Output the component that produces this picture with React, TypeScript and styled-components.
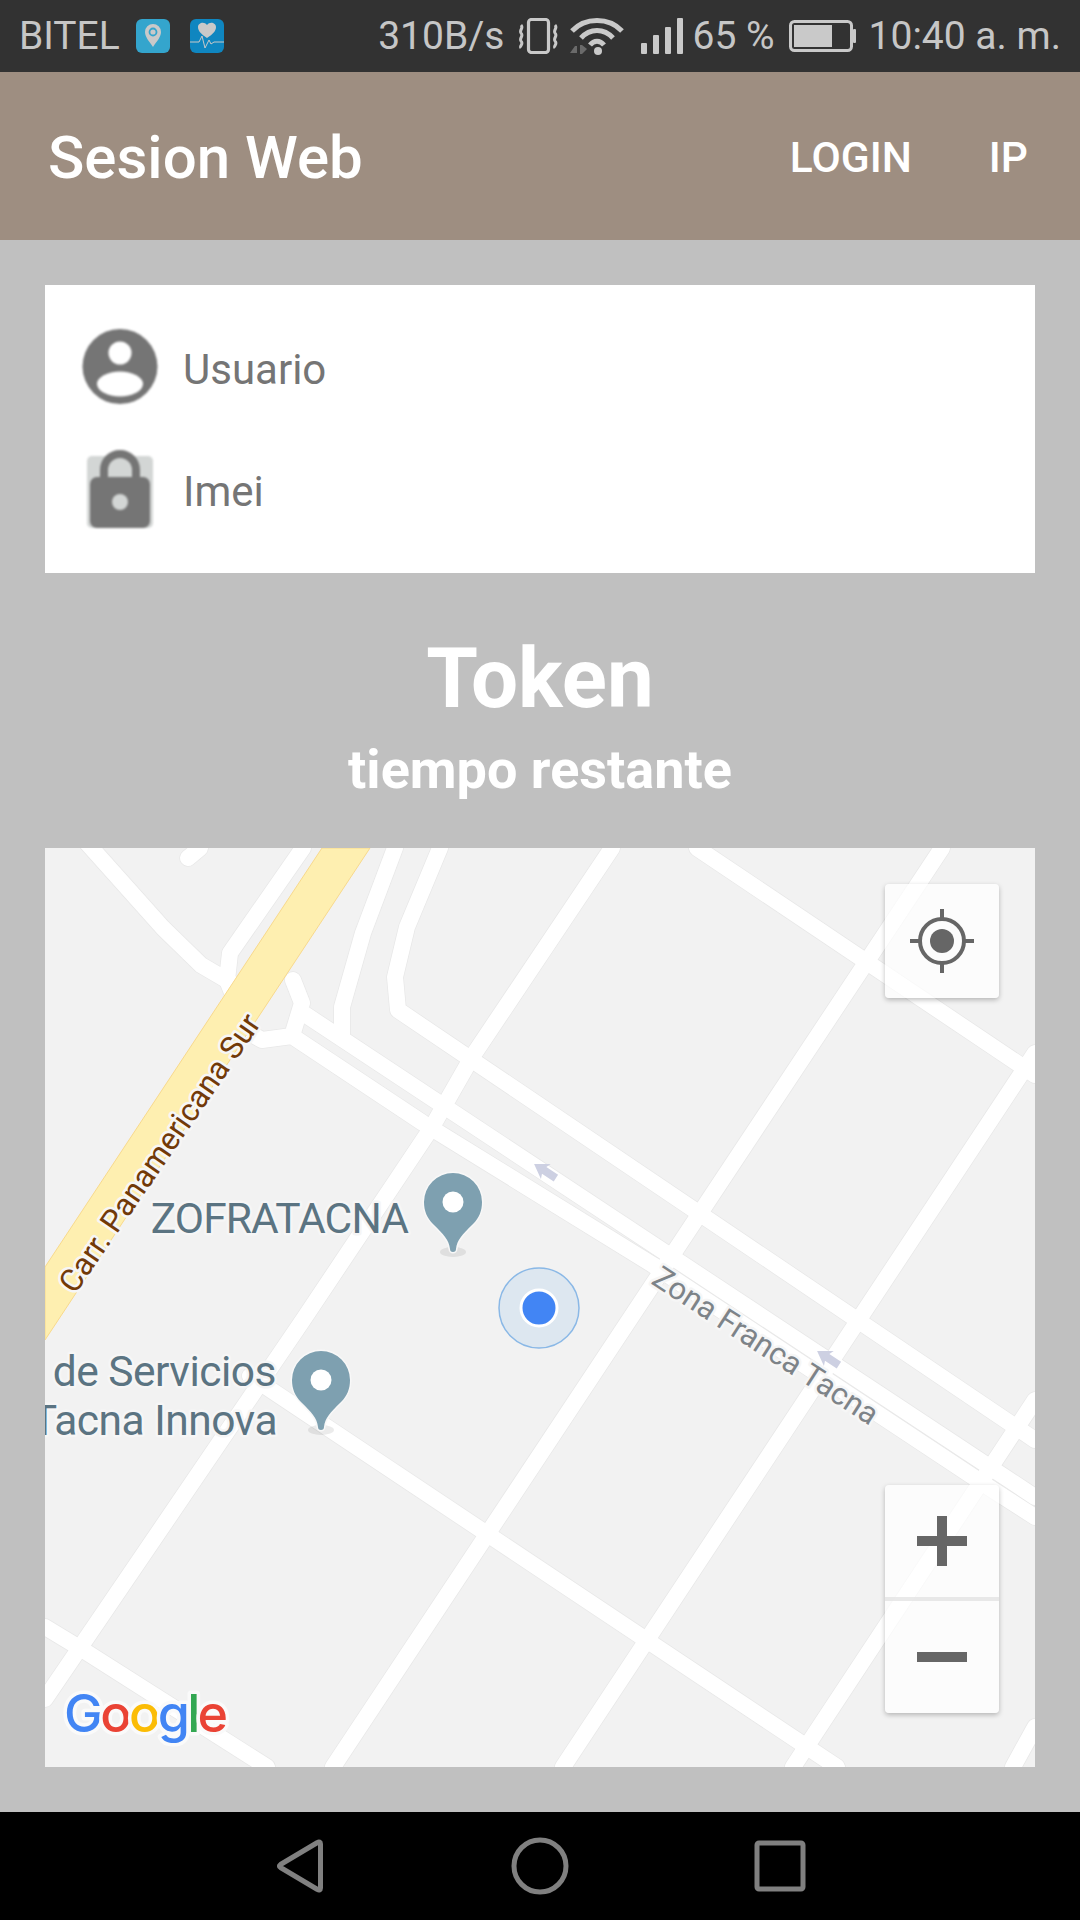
import { createGlobalStyle, styled } from "styled-components";

const GlobalStyle = createGlobalStyle`
  html, body {
    margin: 0;
    padding: 0;
    background: #c0c0c0;
    font-family: Roboto, "Liberation Sans", sans-serif;
  }
`;

const Page = styled.div`
  width: 1080px;
  height: 1920px;
  display: flex;
  flex-direction: column;
  overflow: hidden;
`;

const StatusBar = styled.div`
  height: 72px;
  flex: none;
  background: #323232;
  color: #c6c6c6;
  display: flex;
  align-items: center;
  justify-content: space-between;
  padding: 0 19px 0 19px;
  font-size: 39px;
  font-weight: 400;
`;

const StatusGroup = styled.div<{ $gap?: number }>`
  display: flex;
  align-items: center;
  gap: ${({ $gap }) => $gap ?? 0}px;
`;

const StatusText = styled.span<{ $ml?: number }>`
  white-space: nowrap;
  line-height: 72px;
  margin-left: ${({ $ml }) => $ml ?? 0}px;
`;

const AppIcon = styled.svg`
  display: block;
  width: 34px;
  height: 34px;
`;

const StatusIcon = styled.svg<{ $ml: number }>`
  display: block;
  flex: none;
  margin-left: ${({ $ml }) => $ml}px;
`;

const AppBar = styled.header`
  height: 168px;
  flex: none;
  box-sizing: border-box;
  background: #9e8e81;
  color: #fff;
  display: flex;
  align-items: center;
  justify-content: space-between;
  padding: 3px 52px 0 48px;
`;

const AppTitle = styled.h1`
  margin: 0;
  font-size: 60px;
  font-weight: 500;
`;

const AppActions = styled.nav`
  display: flex;
  gap: 77px;
`;

const AppAction = styled.span`
  font-size: 42.5px;
  font-weight: 500;
`;

const Content = styled.main`
  flex: 1;
  display: flex;
  flex-direction: column;
  padding: 45px 45px;
`;

const UserCard = styled.section`
  height: 288px;
  flex: none;
  box-sizing: border-box;
  background: #fff;
  padding: 44px 38px 0;
  display: flex;
  flex-direction: column;
  gap: 44px;
`;

const UserRow = styled.div`
  display: flex;
  align-items: center;
  height: 78px;
  gap: 24px;
`;

const RowIcon = styled.svg`
  width: 76px;
  height: 80px;
  flex: none;
  filter: blur(1px);
  overflow: visible;
`;

const RowLabel = styled.span`
  font-size: 42px;
  color: #757575;
  margin-top: 2px;
`;

const TokenBlock = styled.section`
  flex: 1;
  display: flex;
  flex-direction: column;
  align-items: center;
  color: #fff;
  padding-top: 57px;
`;

const TokenTitle = styled.div`
  font-size: 83.5px;
  font-weight: 700;
  line-height: 98px;
`;

const TokenSub = styled.div`
  font-size: 54px;
  font-weight: 700;
  line-height: 60px;
  margin-top: 12px;
`;

const MapBox = styled.section`
  position: relative;
  width: 990px;
  height: 919px;
  flex: none;
  background: #f2f2f2;
  overflow: hidden;
`;

const MapCanvas = styled.svg`
  display: block;
  width: 990px;
  height: 919px;
`;

const MapLabel = styled.text<{ $color: string; $size: number; $spacing?: number }>`
  font-family: Roboto, sans-serif;
  font-size: ${({ $size }) => $size}px;
  letter-spacing: ${({ $spacing }) => $spacing ?? 0}px;
  fill: ${({ $color }) => $color};
  stroke: #f6f6f6;
  stroke-width: 5px;
  stroke-linejoin: round;
  paint-order: stroke;
`;

const LogoText = styled.text`
  font-family: Inter, Roboto, sans-serif;
  font-size: 52px;
  font-weight: 500;
  letter-spacing: -2.7px;
  stroke: #fafafa;
  stroke-width: 7px;
  stroke-linejoin: round;
  paint-order: stroke;
`;

const MapControl = styled.button<{ $top?: number; $bottom?: number }>`
  position: absolute;
  right: 36px;
  ${({ $top }) => ($top !== undefined ? `top: ${$top}px;` : "")}
  ${({ $bottom }) => ($bottom !== undefined ? `bottom: ${$bottom}px;` : "")}
  width: 114px;
  padding: 0;
  border: none;
  border-radius: 4px;
  background: rgba(255, 255, 255, 0.72);
  box-shadow: 0 2px 5px rgba(0, 0, 0, 0.25);
  display: flex;
  flex-direction: column;
`;

const ControlCell = styled.div<{ $height: number }>`
  height: ${({ $height }) => $height}px;
  display: flex;
  align-items: center;
  justify-content: center;
`;

const ControlDivider = styled.div`
  height: 4px;
  background: rgba(225, 225, 225, 0.75);
`;

const NavBar = styled.footer`
  height: 108px;
  flex: none;
  background: #000;
  display: flex;
  align-items: center;
  justify-content: center;
`;

const NavSlot = styled.div<{ $width: number }>`
  width: ${({ $width }) => $width}px;
  display: flex;
  justify-content: center;
`;

const NavIcon = styled.svg`
  display: block;
  width: 60px;
  height: 60px;
`;

// page coordinates, the map svg has a viewBox that starts at its corner
const roads = [
  "612,848 472,1057 432,1127 303,1320 45,1699",
  "942,848 333,1767",
  "1035,1053 563,1767",
  "1035,1400 793,1767",
  "1035,1727 1013,1767",
  "440,848 407,927 395,977 398,1010 1035,1440",
  "303,1013 1035,1497",
  "253,1035 262,1040 292,1036 423,1123 653,1265 993,1490 1035,1517",
  "697,848 1035,1075",
  "250,1376 837,1767",
  "45,1627 83,1650 267,1767",
  "87,843 163,928 201,965 230,982",
  "303,848 230,953 227,980 235,1000",
  "293,980 302,1003 292,1036",
  "395,848 363,933 342,1007 342,1035",
  "200,848 188,858",
];

const oneWayArrows = [
  { x: 545, y: 1171 },
  { x: 828, y: 1358 },
];

const pins = [
  { x: 453, y: 1202 },
  { x: 321, y: 1380 },
];

const Pin = ({ x, y }: { x: number; y: number }) => (
  <g transform={`translate(${x} ${y})`}>
    <ellipse cx="0" cy="50" rx="13" ry="5" fill="#000" opacity="0.08" />
    <path
      d="M-3 47C-4 38-9 33-20 22C-26 16-29 9-29 0A29 29 0 1 1 29 0C29 9 26 16 20 22C9 33 4 38 3 47A3 3 0 0 1-3 47Z"
      fill="#7ea0b0"
      stroke="#f8f8f8"
      strokeWidth="3"
      paintOrder="stroke"
    />
    <circle r="10.5" fill="#fff" />
  </g>
);

const RoadMap = () => (
  <MapCanvas viewBox="45 848 990 919">
    <g fill="none" strokeLinejoin="round" strokeLinecap="round">
      {roads.map((points) => (
        <polyline key={points} points={points} stroke="#e8e8e8" strokeWidth="17.5" />
      ))}
      {roads.map((points) => (
        <polyline key={points} points={points} stroke="#fff" strokeWidth="16" />
      ))}
    </g>
    <polygon points="322,848 370,848 45,1340 45,1267" fill="#feefb0" stroke="#f8d98c" strokeWidth="1" />
    {oneWayArrows.map(({ x, y }) => (
      <polygon
        key={x}
        transform={`translate(${x} ${y}) rotate(33)`}
        points="-13,0 1,-9 -1,-4 13,-4 13,4 -1,4 1,9"
        fill="#cdd0e2"
      />
    ))}
    <MapLabel
      $color="#723a08"
      $size={31.5}
      transform="translate(75 1295) rotate(-55.5)"
    >
      Carr. Panamericana Sur
    </MapLabel>
    <MapLabel
      $color="#7d8388"
      $size={31}
      transform="translate(650 1283) rotate(33)"
    >
      Zona Franca Tacna
    </MapLabel>
    <MapLabel $color="#5b7482" $size={42.5} $spacing={-0.9} x="408" y="1233" textAnchor="end">
      ZOFRATACNA
    </MapLabel>
    <MapLabel $color="#5b7482" $size={42.5} $spacing={-0.5} x="276" y="1386" textAnchor="end">
      de Servicios
    </MapLabel>
    <MapLabel $color="#5b7482" $size={42.5} $spacing={-0.5} x="277" y="1435" textAnchor="end">
      Tacna Innova
    </MapLabel>
    {pins.map((pin) => (
      <Pin key={pin.x} {...pin} />
    ))}
    <circle cx="539" cy="1308" r="40" fill="#dde7f0" stroke="#8ab8e6" strokeWidth="1.5" />
    <circle cx="539" cy="1308" r="18" fill="#4285f4" stroke="#fff" strokeWidth="3" />
    <LogoText x="64" y="1732">
      <tspan fill="#4285f4">G</tspan>
      <tspan fill="#ea4335">o</tspan>
      <tspan fill="#fbbc05">o</tspan>
      <tspan fill="#4285f4">g</tspan>
      <tspan fill="#34a853">l</tspan>
      <tspan fill="#ea4335">e</tspan>
    </LogoText>
  </MapCanvas>
);

export default function App() {
  return (
    <Page>
      <GlobalStyle />
      <StatusBar>
        <StatusGroup $gap={16}>
          <StatusText>BITEL</StatusText>
          <StatusGroup $gap={20}>
            <AppIcon viewBox="0 0 34 34">
              <rect width="34" height="34" rx="6" fill="#34a5cd" />
              <path d="M17 28C13 22 9 18 9 13A8 8 0 0 1 25 13C25 18 21 22 17 28Z" fill="#c9c9c9" />
              <circle cx="17" cy="13" r="3.5" fill="none" stroke="#34a5cd" strokeWidth="1.8" />
            </AppIcon>
            <AppIcon viewBox="0 0 34 34">
              <rect width="34" height="34" rx="6" fill="#0f86c0" />
              <path d="M17 19C11 15 8 12 8 8C8 4 14 2 17 6C20 2 26 4 26 8C26 12 23 15 17 19Z" fill="#c9c9c9" />
              <path d="M0 23H9L12 17L15 29L19 21L21 25L24 23H34" fill="none" stroke="#c9c9c9" strokeWidth="1" />
            </AppIcon>
          </StatusGroup>
        </StatusGroup>
        <StatusGroup>
          <StatusText>310B/s</StatusText>
          <StatusIcon $ml={15} width="40" height="36" viewBox="0 0 40 36">
            <rect x="9.5" y="1.5" width="20" height="33" rx="3" fill="none" stroke="#c9c9c9" strokeWidth="3.2" />
            <path d="M2 7C5 10 0 12 2 15C5 18 0 20 2 23C5 26 0 28 2 30M36 7C39 10 34 12 36 15C39 18 34 20 36 23C39 26 34 28 36 30" fill="none" stroke="#c9c9c9" strokeWidth="3" />
          </StatusIcon>
          <StatusIcon $ml={11} width="54" height="37" viewBox="0 0 54 37">
            <path d="M2 13C15 -1 39 -1 52 13" fill="none" stroke="#c9c9c9" strokeWidth="5" />
            <path d="M11 20C20 10 34 10 43 20" fill="none" stroke="#c9c9c9" strokeWidth="5" />
            <path d="M20 27C24 22 30 22 34 27" fill="none" stroke="#c9c9c9" strokeWidth="5" />
            <circle cx="28" cy="33" r="4" fill="#c9c9c9" />
            <path d="M0 35L5 28H7V35ZM10 27H12L17 31L12 36H10Z" fill="#6a6a6a" />
          </StatusIcon>
          <StatusIcon $ml={17} width="42" height="36" viewBox="0 0 42 36">
            <rect x="0" y="25" width="6" height="11" rx="1" fill="#c9c9c9" />
            <rect x="12" y="17" width="6" height="19" rx="1" fill="#c9c9c9" />
            <rect x="24" y="9" width="6" height="27" rx="1" fill="#c9c9c9" />
            <rect x="36" y="0" width="6" height="36" rx="1" fill="#c9c9c9" />
          </StatusIcon>
          <StatusText $ml={9}>65 %</StatusText>
          <StatusIcon $ml={14} width="67" height="32" viewBox="0 0 67 32">
            <rect x="1.5" y="1.5" width="61" height="29" rx="4" fill="none" stroke="#c9c9c9" strokeWidth="3" />
            <rect x="5" y="5" width="38" height="22" fill="#c9c9c9" />
            <rect x="64" y="9" width="3" height="14" rx="1" fill="#c9c9c9" />
          </StatusIcon>
          <StatusText $ml={13}>10:40 a. m.</StatusText>
        </StatusGroup>
      </StatusBar>
      <AppBar>
        <AppTitle>Sesion Web</AppTitle>
        <AppActions>
          <AppAction>LOGIN</AppAction>
          <AppAction>IP</AppAction>
        </AppActions>
      </AppBar>
      <Content>
        <UserCard>
          <UserRow>
            <RowIcon viewBox="0 0 76 80">
              <circle cx="37" cy="38.5" r="37.5" fill="#757575" />
              <circle cx="37" cy="25" r="11.5" fill="#fff" />
              <ellipse cx="37" cy="56" rx="23" ry="12.5" fill="#fff" />
            </RowIcon>
            <RowLabel>Usuario</RowLabel>
          </UserRow>
          <UserRow>
            <RowIcon viewBox="0 0 76 80">
              <rect x="4" y="6" width="66" height="72" rx="5" fill="#d3d6d5" />
              <path d="M21 30V20A16 16 0 0 1 53 20V30" fill="none" stroke="#757575" strokeWidth="8" />
              <rect x="7" y="27" width="60" height="51" rx="7" fill="#757575" />
              <circle cx="37" cy="52" r="8" fill="#d3d6d5" />
            </RowIcon>
            <RowLabel>Imei</RowLabel>
          </UserRow>
        </UserCard>
        <TokenBlock>
          <TokenTitle>Token</TokenTitle>
          <TokenSub>tiempo restante</TokenSub>
        </TokenBlock>
        <MapBox>
          <RoadMap />
          <MapControl $top={36}>
            <ControlCell $height={114}>
              <svg width="66" height="66" viewBox="0 0 66 66">
                <circle cx="33" cy="33" r="22" fill="none" stroke="#666" strokeWidth="4" />
                <circle cx="33" cy="33" r="12" fill="#666" />
                <path d="M33 1V11M33 55V65M1 33H11M55 33H65" stroke="#666" strokeWidth="4" />
              </svg>
            </ControlCell>
          </MapControl>
          <MapControl $bottom={54}>
            <ControlCell $height={112}>
              <svg width="50" height="50" viewBox="0 0 50 50">
                <path d="M20 0H30V20H50V30H30V50H20V30H0V20H20Z" fill="#666" />
              </svg>
            </ControlCell>
            <ControlDivider />
            <ControlCell $height={112}>
              <svg width="50" height="10" viewBox="0 0 50 10">
                <rect width="50" height="10" fill="#666" />
              </svg>
            </ControlCell>
          </MapControl>
        </MapBox>
      </Content>
      <NavBar>
        <NavSlot $width={240}>
          <NavIcon viewBox="0 0 60 60">
            <path d="M50.5 8C50.5 6 49 5.5 47.5 6.5L10.5 28.5C9 29.5 9 30.5 10.5 31.5L47.5 53.5C49 54.5 50.5 54 50.5 52Z" fill="none" stroke="#808080" strokeWidth="5" strokeLinejoin="round" />
          </NavIcon>
        </NavSlot>
        <NavSlot $width={240}>
          <NavIcon viewBox="0 0 60 60">
            <circle cx="30" cy="30" r="26" fill="none" stroke="#808080" strokeWidth="5" />
          </NavIcon>
        </NavSlot>
        <NavSlot $width={240}>
          <NavIcon viewBox="0 0 60 60">
            <rect x="7" y="7" width="46" height="46" rx="2" fill="none" stroke="#808080" strokeWidth="5" />
          </NavIcon>
        </NavSlot>
      </NavBar>
    </Page>
  );
}
